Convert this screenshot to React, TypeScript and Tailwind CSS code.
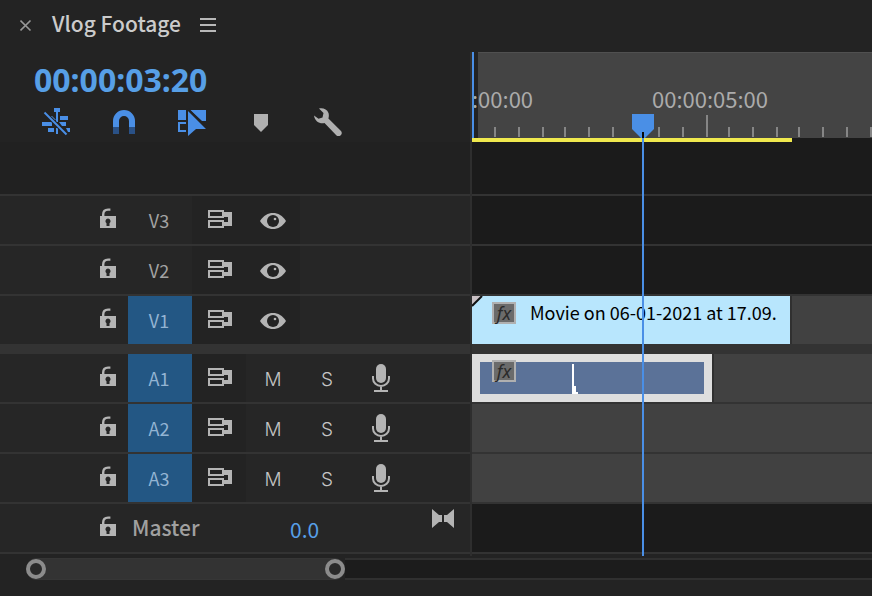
import React from "react";

const SANS = "font-['Noto_Sans_CJK_SC',sans-serif]";

function LockIcon() {
  return (
    <svg width="16" height="24" viewBox="0 0 16 24" aria-hidden="true">
      <path d="M3.2 9V6.5C3.2 3.4 5 1.6 8 1.6h2.4" fill="none" stroke="#b4b4b4" strokeWidth="2.4" />
      <path
        fillRule="evenodd"
        fill="#b4b4b4"
        d="M0 8h16v12H0zM8 10.6a2.6 2.6 0 0 0-1.5 4.7L6.5 18h3l0-2.7A2.6 2.6 0 0 0 8 10.6z"
      />
    </svg>
  );
}

function SyncIcon() {
  return (
    <svg width="26" height="20" viewBox="-2 0 26 20" aria-hidden="true">
      <rect x="1" y="1" width="14" height="6" fill="none" stroke="#b4b4b4" strokeWidth="2" />
      <rect x="1" y="11" width="14" height="6" fill="none" stroke="#b4b4b4" strokeWidth="2" />
      <path d="M16 2h8v14h-8v-4h4V7h-4z" fill="#b4b4b4" />
    </svg>
  );
}

function EyeIcon() {
  return (
    <svg width="26" height="18" viewBox="0 0 26 18" aria-hidden="true">
      <path d="M0 10C3.5 4.6 8 2 13 2s9.500 2.600 13 8c-3.500 5.400-8 8-13 8S3.500 15.400 0 10z" fill="#b4b4b4" />
      <circle cx="13" cy="10" r="6" fill="#232323" />
      <circle cx="15" cy="8" r="1.300" fill="#b4b4b4" />
    </svg>
  );
}

function MicIcon() {
  return (
    <svg width="18" height="28" viewBox="0 0 18 28" aria-hidden="true">
      <rect x="4" y="0" width="10" height="19" rx="5" fill="#b4b4b4" />
      <path d="M1 12v2.500a8 7.500 0 0 0 16 0V12M9 22v5M2 27h14" fill="none" stroke="#b4b4b4" strokeWidth="2" />
    </svg>
  );
}

function Cell({ label, children, tint = "" }: { label: string; children: React.ReactNode; tint?: string }) {
  return (
    <button type="button" aria-label={label} className={`flex h-full w-[54px] items-center justify-center ${tint}`}>
      {children}
    </button>
  );
}

function TrackHeader({ name, active, audio }: { name: string; active?: boolean; audio?: boolean }) {
  return (
    <div className="flex h-[50px] items-center border-b-2 border-[#333333] bg-[#262626] pl-[100px]">
      <button type="button" aria-label={`Lock ${name}`}>
        <LockIcon />
      </button>
      <button
        type="button"
        className={`ml-3 h-full w-16 pr-[2px] text-[18px] leading-6 ${
          active ? "bg-[#235784] text-[#93b4d3]" : "bg-[#262626] text-[#a3a3a3]"
        }`}
      >
        {name}
      </button>
      <Cell label={`Sync lock ${name}`} tint="bg-[#232323]">
        <SyncIcon />
      </Cell>
      {audio ? (
        <>
          <button type="button" className="h-full w-[54px] pt-1 font-['Inter',sans-serif] text-[19px] font-light leading-6 text-[#c4c4c4]">
            M
          </button>
          <button type="button" className="h-full w-[54px] pt-1 font-['Inter',sans-serif] text-[19px] font-light leading-6 text-[#c4c4c4]">
            S
          </button>
          <Cell label={`Record ${name}`}>
            <MicIcon />
          </Cell>
        </>
      ) : (
        <Cell label={`Toggle ${name} output`} tint="bg-[#232323]">
          <EyeIcon />
        </Cell>
      )}
    </div>
  );
}

function FxBadge() {
  return (
    <span className="flex h-[22px] w-6 shrink-0 items-center justify-center border-2 border-[#b0b0b0] bg-[#6b6b6b] font-['Noto_Sans',sans-serif] text-[18px] italic leading-5 text-[#2a2a2a]">
      fx
    </span>
  );
}

const TICKS = [22, 46, 70, 92, 116, 140, 186, 210, 256, 280, 304, 326, 350, 374, 398];
const THUMB =
  "h-5 min-w-0 flex-1 appearance-none bg-transparent [&::-webkit-slider-thumb]:h-5 [&::-webkit-slider-thumb]:w-5 [&::-webkit-slider-thumb]:appearance-none [&::-webkit-slider-thumb]:rounded-full [&::-webkit-slider-thumb]:border-4 [&::-webkit-slider-thumb]:border-solid [&::-webkit-slider-thumb]:border-[#8c8c8c] [&::-webkit-slider-thumb]:bg-[#2a2a2a]";

function Header() {
  return (
    <header className="flex h-[52px] items-center pl-5">
      <button type="button" aria-label="Close panel" className="flex h-6 w-3">
        <svg width="12" height="24" viewBox="0 0 12 24" aria-hidden="true">
          <path d="M0.500 6.500l10 10M10.500 6.500l-10 10" stroke="#989898" strokeWidth="1.600" />
        </svg>
      </button>
      <h1 className="ml-5 w-[148px] whitespace-nowrap pb-[6px] text-[21px] font-medium leading-8 text-[#cbcbcb]">Vlog Footage</h1>
      <button type="button" aria-label="Panel menu" className="pb-[2px]">
        <svg width="16" height="16" viewBox="0 0 16 16" aria-hidden="true">
          <path d="M0 2h16M0 8h16M0 14h16" stroke="#b8b8b8" strokeWidth="2" />
        </svg>
      </button>
    </header>
  );
}

function Tools() {
  return (
    <div className="flex items-center gap-10 pl-[42px]">
      <button type="button" aria-label="Insert as nests">
        <svg width="28" height="28" viewBox="0 0 28 28" aria-hidden="true">
          <g fill="#4a8fe6">
            <path d="M12 0h6v4h-2v10h-2V4h-2zM18 8h8v4h-8zM6 8h4l4 4h-4zM0 14h10v4H0zM17 14h7v4h-4zM6 20h6v4H6zM24 20h4v4h-2zM14 20h2v6h-2z" />
          </g>
          <path d="M3 5l22 22" stroke="#232323" strokeWidth="4" />
          <path d="M2.500 4.500l22 22" stroke="#4a8fe6" strokeWidth="2" />
        </svg>
      </button>
      <button type="button" aria-label="Snap" className="ml-[2px]">
        <svg width="24" height="28" viewBox="0 0 24 28" aria-hidden="true">
          <path d="M4 19v-6a8 8 0 0 1 16 0v6" fill="none" stroke="#4a8fe6" strokeWidth="6" />
          <path d="M1 19h6v7H1zM17 19h6v7h-6z" fill="#2a5186" />
        </svg>
      </button>
      <button type="button" aria-label="Linked selection" className="ml-[2px]">
        <svg width="30" height="28" viewBox="0 0 30 28" aria-hidden="true">
          <path d="M0 2h8v10H0zM12 2h16v11h-4z" fill="#4a8fe6" />
          <path d="M8 15H1v8h7" fill="none" stroke="#4a8fe6" strokeWidth="2" />
          <path d="M10 3v25l8-7h10z" fill="#4a8fe6" />
          <path d="M10 1l19 19" stroke="#232323" strokeWidth="1.800" />
        </svg>
      </button>
      <button type="button" aria-label="Add marker" className="ml-[6px]">
        <svg width="14" height="28" viewBox="0 0 14 28" aria-hidden="true">
          <path d="M0 6h14v11l-7 7-7-7z" fill="#b0b0b0" />
        </svg>
      </button>
      <button type="button" aria-label="Display settings" className="ml-[6px]">
        <svg width="28" height="28" viewBox="0 0 28 28" aria-hidden="true">
          <path
            d="M5 0.500C9 -.3 13 1 14.500 5c.6 2 .4 4-.1 5.500L27 23c2.500 2.800-1.700 7-4.500 4.500L10.500 15C6 16 1 14 0 7.500l4.500 3.200 4-1.200L9.500 5z"
            fill="#b0b0b0"
          />
        </svg>
      </button>
    </div>
  );
}

export default function App() {
  return (
    <main className={`min-h-screen overflow-hidden bg-[#232323] ${SANS}`}>
      <Header />
      <div className="flex">
        <section aria-label="Track headers" className="w-[472px] shrink-0 border-r-2 border-[#2e2e2e]">
          <div className="h-[90px]">
            <button type="button" className="block h-14 pl-[34px] font-['Noto_Sans',sans-serif] text-[32px] font-bold leading-[56px] text-[#579fe6]">
              00:00:03:20
            </button>
            <Tools />
          </div>
          <div className="h-[54px] border-b-2 border-[#333333] bg-[#212121]" />
          <TrackHeader name="V3" />
          <TrackHeader name="V2" />
          <TrackHeader name="V1" active />
          <div className="h-2 bg-[#333333]" />
          <TrackHeader name="A1" active audio />
          <TrackHeader name="A2" active audio />
          <TrackHeader name="A3" active audio />
          <div className="flex h-[50px] items-center border-b-2 border-[#333333] bg-[#262626] pl-[100px] pr-4">
            <button type="button" aria-label="Lock Master">
              <LockIcon />
            </button>
            <span className="ml-4 w-[158px] pb-[2px] text-[21px] font-medium leading-8 text-[#a0a0a0]">Master</span>
            <button type="button" className="pt-[2px] text-[21px] leading-8 text-[#579fe6]">
              0.0
            </button>
            <button type="button" aria-label="Fit tracks" className="ml-auto self-start pt-1">
              <svg width="22" height="22" viewBox="0 0 22 22" aria-hidden="true">
                <path d="M0 1l7 6h3v7H7l-7 6zM22 1l-7 6h-3v7h3l7 6z" fill="#b4b4b4" />
              </svg>
            </button>
          </div>
          <div className="h-[2px]" />
        </section>

        <section aria-label="Timeline" className="relative min-w-0 flex-1 overflow-hidden">
          <div className="relative h-[90px] overflow-hidden bg-[#1b1b1b]">
            <div className="h-[86px] border-l-2 border-[#4a8fe6]">
              <div className="h-full border-l-4 border-[#232323]">
                <div className="h-full border-t border-[#505050] bg-[#444444]" />
              </div>
            </div>
            <div className="h-1 w-80 bg-[#f0e94e]" />
            <span className="absolute left-0 top-[30px] text-[22px] leading-8 text-[#ababab]">:00:00</span>
            <span className="absolute left-[180px] top-[30px] text-[22px] leading-8 text-[#ababab]">00:00:05:00</span>
            <svg className="absolute left-0 top-0" width="400" height="86" aria-hidden="true">
              {TICKS.map((x) => (
                <rect key={x} x={x} y="75" width="2" height="10" fill="#868686" />
              ))}
              <rect x="234" y="63" width="2" height="22" fill="#868686" />
            </svg>
          </div>
          <div className="h-[54px] border-b-2 border-[#333333] bg-[#1b1b1b]" />
          <div className="h-[50px] border-b-2 border-[#333333] bg-[#1b1b1b]" />
          <div className="h-[50px] border-b-2 border-[#333333] bg-[#1b1b1b]" />
          <div className="h-[50px] border-b-2 border-[#333333] bg-[#414141]">
            <div className="relative flex h-full w-80 items-start border-r-2 border-[#303030] bg-[#b8e6fd] pl-5 pt-[6px]">
              <svg className="absolute left-0 top-0" width="12" height="12" aria-hidden="true">
                <path d="M0 0h9L0 9z" fill="#c9c0c4" />
                <path d="M0 10L10 0" stroke="#111111" strokeWidth="2" />
              </svg>
              <FxBadge />
              <span className="ml-[14px] whitespace-nowrap text-[18px] leading-5 text-black">Movie on 06-01-2021 at 17.09.</span>
            </div>
          </div>
          <div className="h-2 bg-[#333333]" />
          <div className="h-[50px] border-b-2 border-[#333333] bg-[#414141]">
            <div className="h-full w-[242px] border-r-2 border-[#303030]">
              <div className="relative h-full border-8 border-[#dedede] bg-[#5b7298] pl-3">
                <div className="-mt-[2px]">
                  <FxBadge />
                </div>
                <svg className="absolute left-[92px] top-0" width="8" height="32" aria-hidden="true">
                  <path d="M0 2h2v22h2v6h2v2H0z" fill="#ffffff" />
                </svg>
              </div>
            </div>
          </div>
          <div className="h-[50px] border-b-2 border-[#333333] bg-[#414141]" />
          <div className="h-[50px] border-b-2 border-[#333333] bg-[#414141]" />
          <div className="h-[50px] border-b-2 border-[#333333] bg-[#1b1b1b]" />
          <div className="absolute bottom-0 left-[160px] top-[62px] w-[22px]">
            <svg width="22" height="24" viewBox="0 0 22 24" aria-hidden="true">
              <path d="M0 0h22v15l-9 9H9l-9-9z" fill="#4a8fe6" />
              <path d="M10 18h2v6h-2z" fill="#0b0b0b" />
            </svg>
            <div className="absolute bottom-0 left-[10px] top-6 w-[2px] bg-[#4a8fe6]" />
          </div>
        </section>
      </div>
      <div className="flex pl-[26px] pt-[2px]">
        <div className="flex w-[319px] items-center rounded-full border-y border-[#363636] bg-[#333333]">
          <input type="range" aria-label="Visible range start" defaultValue={0} className={THUMB} />
          <input type="range" aria-label="Visible range end" defaultValue={100} className={THUMB} />
        </div>
        <div className="flex-1 border-y-2 border-[#303030] bg-[#1c1c1c]" />
      </div>
    </main>
  );
}
